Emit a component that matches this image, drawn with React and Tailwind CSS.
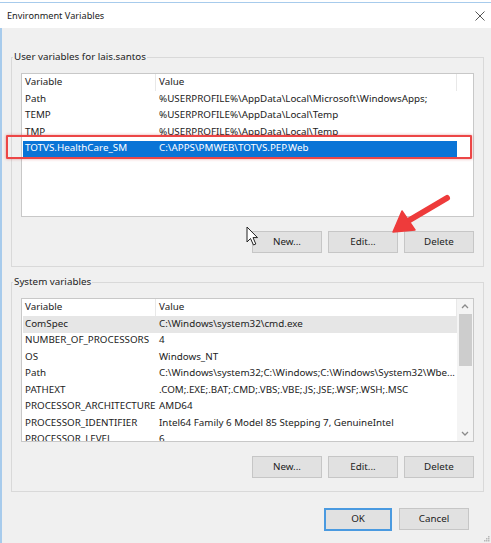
import React from 'react'

const userRows = [
  ['Path', '%USERPROFILE%\\AppData\\Local\\Microsoft\\WindowsApps;'],
  ['TEMP', '%USERPROFILE%\\AppData\\Local\\Temp'],
  ['TMP', '%USERPROFILE%\\AppData\\Local\\Temp'],
  ['TOTVS.HealthCare_SM', 'C:\\APPS\\PMWEB\\TOTVS.PEP.Web'],
]

const systemRows = [
  ['ComSpec', 'C:\\Windows\\system32\\cmd.exe'],
  ['NUMBER_OF_PROCESSORS', '4'],
  ['OS', 'Windows_NT'],
  ['Path', 'C:\\Windows\\system32;C:\\Windows;C:\\Windows\\System32\\Wbe...'],
  ['PATHEXT', '.COM;.EXE;.BAT;.CMD;.VBS;.VBE;.JS;.JSE;.WSF;.WSH;.MSC'],
  ['PROCESSOR_ARCHITECTURE', 'AMD64'],
  ['PROCESSOR_IDENTIFIER', 'Intel64 Family 6 Model 85 Stepping 7, GenuineIntel'],
  ['PROCESSOR_LEVEL', '6'],
]

function WinButton({ children, focused }) {
  return (
    <button
      className={
        'flex items-center justify-center bg-[#e1e1e1] text-[#222] ' +
        (focused ? 'w-[68px] h-[23px] border-2 border-[#4a9ae0]' : 'w-[70px] h-[22px] border border-[#c6c6c6]')
      }
    >
      {children}
    </button>
  )
}

function Scrollbar() {
  return (
    <div className="w-[16px] bg-[#f4f4f4] flex flex-col items-center">
      <svg width="16" height="15" viewBox="0 0 16 15" className="shrink-0">
        <path d="M5 9 L8 6 L11 9" fill="none" stroke="#8a8a8a" strokeWidth="1.3" />
      </svg>
      <div className="w-[13px] h-[52px] bg-[#cdcdcd]" />
      <div className="flex-1" />
      <svg width="16" height="15" viewBox="0 0 16 15" className="shrink-0">
        <path d="M5 6 L8 9 L11 6" fill="none" stroke="#8a8a8a" strokeWidth="1.3" />
      </svg>
    </div>
  )
}

function VarList({ rows, selected, hot, scroll }) {
  return (
    <div className="h-[144px] border border-[#c8c8c8] bg-white flex overflow-hidden">
      <div className="w-[435px] shrink-0">
        <div className="flex h-[17px]">
          <div className="w-[134px] pl-[3px] border-r border-[#e8e8e8] flex items-center">Variable</div>
          <div className="w-[301px] pl-[3px] border-r border-[#e8e8e8] flex items-center">Value</div>
        </div>
        {rows.map(([name, value], i) => (
          <div
            key={name + i}
            className={
              'flex h-[16.5px] items-center ml-[1px] whitespace-nowrap ' +
              (i === selected ? 'bg-[#0a74d6] text-white ' : '') +
              (i === hot ? 'bg-[#e6e6e6] ' : '')
            }
          >
            <div className="w-[133px] pl-[2px] overflow-hidden">{name}</div>
            <div className="flex-1 pl-[3px] overflow-hidden">{value}</div>
          </div>
        ))}
      </div>
      {scroll ? <Scrollbar /> : <div className="flex-1" />}
    </div>
  )
}

function Group({ title, children, className }) {
  return (
    <fieldset className={'ml-[9px] mr-[7px] border border-[#d9d9d9] p-0 ' + className}>
      <legend className="ml-[1px] px-[1px] leading-[12px]">{title}</legend>
      <div className="px-[9px] pt-[10px] pb-[13px]">{children}</div>
    </fieldset>
  )
}

export default function App() {
  return (
    <div
      className="relative w-[491px] h-[543px] overflow-hidden bg-[#f0f0f0] flex flex-col text-[9.8px] text-[#222]"
      style={{ fontFamily: '"Segoe UI", "Noto Sans", sans-serif' }}
    >
      {/* title bar */}
      <div className="h-[2px] bg-white" />
      <div className="h-[26px] bg-white border-t border-[#a7cbec] flex items-center justify-between pl-[7px] pr-[6px]">
        <span className="text-[9.2px] text-[#1a1a1a]">Environment Variables</span>
        <svg width="10" height="10" viewBox="0 0 10 10">
          <path d="M0.5 0.5 L9.5 9.5 M9.5 0.5 L0.5 9.5" stroke="#555" strokeWidth="1" />
        </svg>
      </div>

      <div className="flex-1 flex flex-col border-l-2 border-[#a7cbec]">
        <Group title="User variables for lais.santos" className="mt-[23px]">
          <VarList rows={userRows} selected={3} />
          <div className="flex justify-end gap-[6px] mt-[14px]">
            <WinButton>New...</WinButton>
            <WinButton>Edit...</WinButton>
            <WinButton>Delete</WinButton>
          </div>
        </Group>

        <Group title="System variables" className="mt-[9px]">
          <VarList rows={systemRows} hot={0} scroll />
          <div className="flex justify-end gap-[6px] mt-[14px]">
            <WinButton>New...</WinButton>
            <WinButton>Edit...</WinButton>
            <WinButton>Delete</WinButton>
          </div>
        </Group>

        <div className="flex justify-end gap-[7px] mt-[16px] mr-[22px]">
          <WinButton focused>OK</WinButton>
          <WinButton>Cancel</WinButton>
        </div>
      </div>

      {/* annotation: red box round the selected row */}
      <div className="absolute left-[6px] top-[135px] w-[466px] h-[24px] border-2 border-[#ec4646] rounded-[1px] shadow-[0_0_3px_rgba(200,40,40,0.45)]" />

      {/* annotation: arrow pointing at Edit... */}
      <svg className="absolute left-[380px] top-[185px]" width="80" height="60" viewBox="0 0 80 60">
        <g fill="#ee3b3b" stroke="#ee3b3b" strokeLinejoin="round">
          <path d="M67 13 L28 36" strokeWidth="6" strokeLinecap="round" />
          <path d="M13 47 L22 26 L35 45 Z" strokeWidth="1.5" />
        </g>
      </svg>

      {/* mouse pointer */}
      <svg className="absolute left-[246px] top-[226px]" width="14" height="21" viewBox="0 0 14 21">
        <path
          d="M1 1 L1 16 L4.5 12.5 L7.5 19 L9.8 18 L7 11.6 L11.5 11.6 Z"
          fill="#fff"
          stroke="#222"
          strokeWidth="1"
          strokeLinejoin="round"
        />
      </svg>

      {/* resize grip */}
      <svg className="absolute right-[1px] bottom-[1px]" width="6" height="6" viewBox="0 0 6 6">
        <rect x="4" y="0" width="1.5" height="1.5" fill="#b8b8b8" />
        <rect x="2" y="2" width="1.5" height="1.5" fill="#b8b8b8" />
        <rect x="4" y="2" width="1.5" height="1.5" fill="#b8b8b8" />
        <rect x="0" y="4" width="1.5" height="1.5" fill="#b8b8b8" />
        <rect x="2" y="4" width="1.5" height="1.5" fill="#b8b8b8" />
        <rect x="4" y="4" width="1.5" height="1.5" fill="#b8b8b8" />
      </svg>
    </div>
  )
}
